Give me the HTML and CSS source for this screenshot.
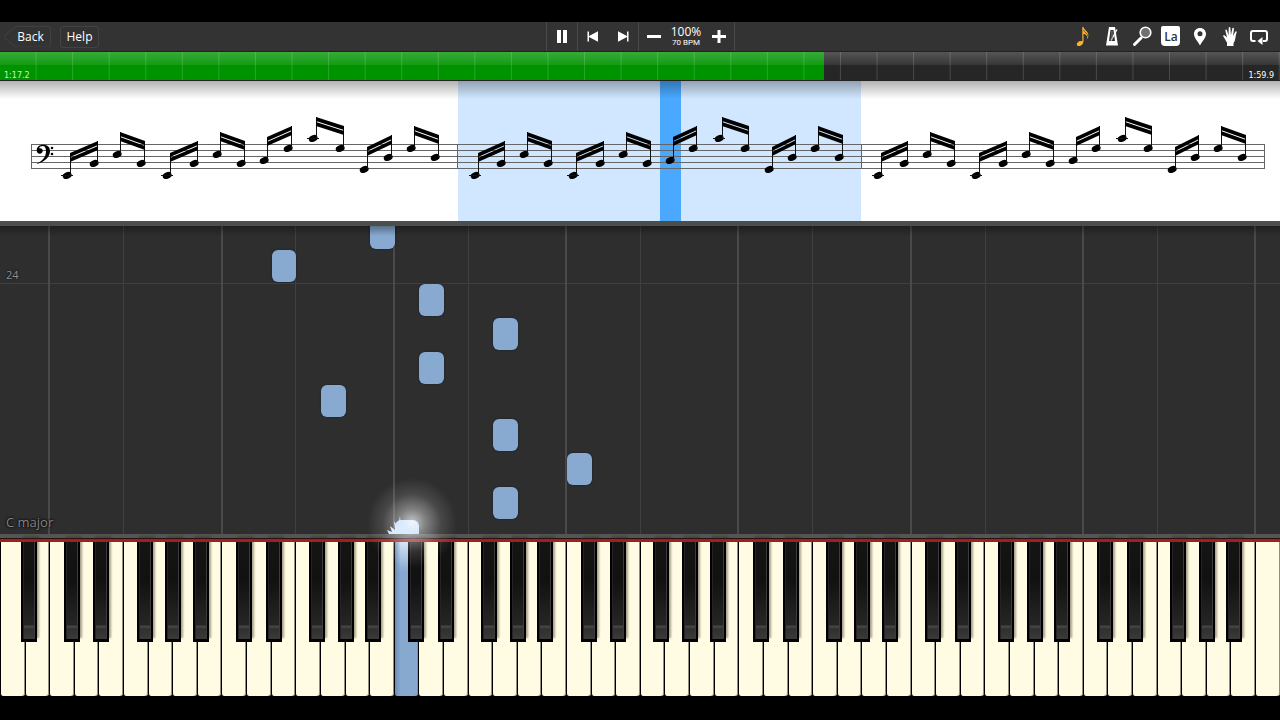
FILE: index.html
```
<!DOCTYPE html>
<html lang="en">
<head>
    <meta charset="UTF-8">
    <meta name="viewport" content="width=device-width, initial-scale=1.0">
    <title>Piano player</title>
    <link rel="stylesheet" href="styles.css">
</head>
<body>
    <header class="toolbar">
        <nav class="menu">
            <button class="menu-button back">
                <svg class="back-shape" viewBox="0 0 48 22"><path d="M13 .5H45Q47.500 .5 47.500 3V19Q47.500 21.500 45 21.500H13Q11 21.500 9 19L1 12.500Q0 11 1 9.500L9 3Q11 .5 13 .5Z"/></svg>
                Back
            </button>
            <button class="menu-button help">Help</button>
        </nav>

        <div class="transport">
            <button class="icon-button" aria-label="Pause"><svg viewBox="0 0 24 24"><path d="M7 6h4v13H7zM13 6h4v13h-4z"/></svg></button>
            <div class="skip">
                <button class="icon-button" aria-label="Previous"><svg viewBox="0 0 24 24"><path d="M6.500 7.500H8V12l9-4.700v10.400L8 13v4.500H6.500z"/></svg></button>
                <button class="icon-button" aria-label="Next"><svg viewBox="0 0 24 24"><path d="M17.500 7.500H16V12L7 7.300v10.400L16 13v4.500h1.500z"/></svg></button>
            </div>
            <div class="speed">
                <button class="icon-button" aria-label="Slower"><svg viewBox="0 0 24 24"><path d="M5 11h14v3H5z"/></svg></button>
                <div class="tempo"><span class="percent">100%</span><span class="bpm">70 BPM</span></div>
                <button class="icon-button" aria-label="Faster"><svg viewBox="0 0 24 24"><path d="M5 11h5.500V6h3v5H19v3h-5.500v5h-3v-5H5z"/></svg></button>
            </div>
        </div>

        <div class="tools">
            <button class="icon-button" aria-label="Sheet music">
                <svg class="orange" viewBox="0 0 24 24"><path d="M11.300 3h1.200c.3 3 5.700 4.500 4.800 9.500-.2 1.500-.8 2.300-1.200 2.800.8-3-.8-5-3.600-5.600V17c0 3-2.500 5-4.600 5-2.400 0-2.600-2.300-1.200-3.600 1.200-1.200 3-1.600 4.600-1z"/><path d="M12.500 6c.5 2.300 4.500 3 4.600 7" fill="none" stroke="#333" stroke-width=".7"/></svg>
            </button>
            <button class="icon-button" aria-label="Metronome">
                <svg viewBox="0 0 24 24"><path fill-rule="evenodd" d="M9 3h6l3 18.500H6zM10.500 6L9 17h6L13.500 6z"/><path d="M11 16.500L17 5.500" fill="none" stroke="#fff" stroke-width="1.300"/><path d="M12 7v9" fill="none" stroke="#777" stroke-width="1"/></svg>
            </button>
            <button class="icon-button" aria-label="Zoom">
                <svg viewBox="0 0 24 24"><path d="M11 14L4.500 20.500" fill="none" stroke="#fff" stroke-width="3" stroke-linecap="round"/><circle cx="15.500" cy="8.500" r="5.300" fill="#707070" stroke="#fff" stroke-width="1.600"/></svg>
            </button>
            <button class="icon-button" aria-label="Note labels"><span class="la">La</span></button>
            <button class="icon-button" aria-label="Bookmark">
                <svg viewBox="0 0 24 24"><path fill-rule="evenodd" d="M12 4c3.500 0 6 2.600 6 6 0 3.600-3.500 7-6 11.500C9.500 17 6 13.600 6 10c0-3.400 2.500-6 6-6zM12 7.300a2.500 2.500 0 1 0 0 5 2.500 2.500 0 1 0 0-5z"/></svg>
            </button>
            <button class="icon-button" aria-label="Hands">
                <svg viewBox="0 0 24 24"><path d="M9 22v-3.500C7.500 16.500 6.500 14 5.300 12.500c-.6-1.200.8-1.700 1.700-.8L9 13.500 7.400 6.700c-.2-1.300 1.200-1.500 1.600-.3l1.500 5L10.700 4c0-1.300 1.600-1.300 1.700 0l.5 7.200L14.300 4.600c.3-1.200 1.800-.9 1.600.3L15.100 12l2-4c.5-1.200 1.800-.6 1.500.5-1 3-1.200 6-1.800 8.200-.3 1-1 1.700-1.300 2.500V22z"/></svg>
            </button>
            <button class="icon-button" aria-label="Loop">
                <svg viewBox="0 0 24 24"><path d="M8.500 17H6q-2 0-2-2V9q0-2 2-2h12q2 0 2 2v6q0 2-2 2h-2" fill="none" stroke="#fff" stroke-width="2"/><path d="M10.500 17l5-4v8z"/></svg>
            </button>
        </div>
    </header>

    <div class="timeline">
        <input type="range" class="seek" min="0" max="119.9" step="0.1" value="77.2" aria-label="Song position">
        <span class="time elapsed">1:17.2</span>
        <span class="time total">1:59.9</span>
    </div>

    <section class="score" aria-label="Sheet music">
        <svg id="sheet" viewBox="0 0 1280 140">
            <rect class="current-bar" x="458" y="0" width="403" height="140"/>
            <rect class="cursor" x="660" y="0" width="21" height="140"/>
            <g class="staff">
                <path d="M31 63.500H1265M31 69.500H1265M31 75.500H1265M31 81.500H1265M31 87.500H1265"/>
                <path d="M31.500 63V88M457.500 63V88M861.500 63V88M1264.500 63V88"/>
            </g>
            <!-- bass clef -->
            <path d="M37 82.500c5.500-2.500 9-6.500 9-12.200 0-3.300-1-5.300-3.200-5.300-1.800 0-3.200.8-3.800 2.300 2-.6 3.700.6 3.700 2.500 0 1.700-1.200 2.900-2.900 2.900-1.900 0-3.100-1.400-3.100-3.400 0-3.400 2.700-5.500 6.500-5.500 4.300 0 6.800 2.400 6.800 6.300 0 6.300-5.500 10.700-13 13z"/>
            <circle cx="52" cy="67" r="1.300"/>
            <circle cx="52" cy="73" r="1.300"/>
        </svg>
    </section>

    <main class="roll" id="roll">
        <div class="bar-line"><span>24</span></div>
        <span class="song-key">C major</span>
    </main>

    <section class="keyboard" id="keyboard" aria-label="Keyboard"></section>

    <script src="script.js"></script>
</body>
</html>
```
FILE: styles.css
```
* {
    box-sizing: border-box;
}
body {
    margin: 0;
    padding: 22px 0 24px;
    min-height: 100vh;
    display: flex;
    flex-direction: column;
    background: #000;
    color: #fff;
    font-family: "Open Sans", "Noto Sans", sans-serif;
    font-size: 12px;
    overflow-x: hidden;
}
button {
    margin: 0;
    padding: 0;
    border: 0;
    background: none;
    color: inherit;
    font: inherit;
    cursor: pointer;
}

/* toolbar */
.toolbar {
    display: grid;
    grid-template-columns: 1fr auto 1fr;
    height: 29px;
    background: #333;
}
.menu {
    display: flex;
    align-items: center;
    gap: 9px;
    padding-left: 4px;
}
.menu-button {
    position: relative;
    height: 22px;
    font-weight: 500;
    line-height: 20px;
}
.back {
    width: 47px;
    padding-left: 6px;
}
.back-shape {
    position: absolute;
    inset: 0;
    fill: none;
    stroke: #434343;
}
.help {
    width: 39px;
    border: 1px solid #434343;
    border-radius: 3px;
}
.transport {
    display: flex;
    border-left: 1px solid #4a4a4a;
    border-right: 1px solid #4a4a4a;
}
.skip {
    display: flex;
    border-left: 1px solid #4a4a4a;
    border-right: 1px solid #4a4a4a;
}
.speed {
    display: flex;
}
.icon-button {
    display: flex;
    align-items: center;
    justify-content: center;
    width: 30px;
    height: 28px;
}
.icon-button svg {
    width: 24px;
    height: 24px;
    fill: #fff;
}
.icon-button .orange {
    fill: #f9b233;
}
.tempo {
    display: flex;
    flex-direction: column;
    align-items: center;
    width: 35px;
    padding-top: 3px;
}
.percent {
    font-size: 12px;
    line-height: 14px;
}
.bpm {
    font-family: Roboto, sans-serif;
    font-size: 8px;
    line-height: 8px;
}
.tools {
    display: flex;
    justify-content: space-between;
    justify-self: end;
    width: 204px;
    margin-right: 7px;
}
.tools .icon-button {
    width: 28px;
}
.la {
    width: 19px;
    height: 20px;
    padding-top: 2px;
    border-radius: 2px 2px 4px 4px;
    background: #fff;
    color: #333;
    font-size: 12px;
    font-weight: 600;
    line-height: 18px;
}

/* timeline */
.timeline {
    position: relative;
    height: 30px;
}
.seek {
    -webkit-appearance: none;
    appearance: none;
    display: block;
    width: 100%;
    height: 30px;
    margin: 0;
    border-top: 1px solid #222;
    border-bottom: 1px solid #222;
    background:
        linear-gradient(90deg, transparent 97%, rgba(255, 255, 255, .16) 97%) 0 0 / calc(100% / 35) 100%,
        linear-gradient(rgba(255, 255, 255, .22), rgba(255, 255, 255, .08) 45%, transparent 47%),
        linear-gradient(90deg, #009300 64.4%, #262626 64.4%);
}
.seek::-webkit-slider-thumb {
    -webkit-appearance: none;
    width: 1px;
    height: 28px;
}
.time {
    position: absolute;
    bottom: 1px;
    font-family: "DejaVu Sans", sans-serif;
    font-size: 8px;
    line-height: 9px;
    pointer-events: none;
}
.elapsed {
    left: 4px;
    color: #c4f5c4;
}
.total {
    right: 6px;
}

/* sheet music */
.score {
    position: relative;
    background: #fff;
}
.score::after {
    content: "";
    position: absolute;
    inset: 0 0 auto;
    height: 18px;
    background: linear-gradient(rgba(0, 0, 0, .3), transparent);
}
.score svg {
    display: block;
    width: 100%;
}
.current-bar {
    fill: #d1e7ff;
}
.cursor {
    fill: #4aa9ff;
}
.staff path {
    fill: none;
    stroke: #666;
}
.stem {
    stroke: #111;
}

/* falling notes */
.roll {
    position: relative;
    flex: 1;
    min-height: 200px;
    border-top: 5px solid #4c4e4c;
    background: #2e2e2e;
    overflow: hidden;
}
.roll::before {
    content: "";
    position: absolute;
    z-index: 1;
    inset: 0 0 auto;
    height: 10px;
    background: linear-gradient(rgba(0, 0, 0, .35), transparent);
}
.guide {
    position: absolute;
    top: 0;
    bottom: 0;
    width: 1px;
    background: #404040;
}
.guide.octave {
    width: 2px;
    margin-left: -1px;
    background: #4a4a4a;
}
.bar-line {
    position: absolute;
    top: 0;
    left: 0;
    right: 0;
    height: 18.700%;
    border-bottom: 1px solid #3f3f3f;
}
.bar-line span {
    position: absolute;
    left: 6px;
    bottom: 1px;
    color: #909090;
    font-size: 11px;
    line-height: 14px;
    text-shadow: 0 0 2px #000;
}
.song-key {
    position: absolute;
    z-index: 1;
    left: 6px;
    bottom: 3px;
    color: #858585;
    font-size: 13px;
    line-height: 18px;
    text-shadow: 0 0 3px #000, 0 0 2px #000;
}
.note {
    position: absolute;
    width: calc(100% / 52);
    height: 32px;
    margin-left: 1px;
    border-radius: 6px;
    background: #88aad1;
    box-shadow: 0 0 2px #101c2c;
}
.note.playing {
    background: #b8d5f5;
}

/* keyboard */
.keyboard {
    position: relative;
    display: flex;
    height: 162px;
    border-top: 4px solid #555;
    background: #000;
}
.keyboard::before {
    content: "";
    position: absolute;
    z-index: 2;
    top: 0;
    left: 0;
    right: 0;
    height: 3px;
    border-top: 1px solid #2b1212;
    background: #a02020;
}
.slot {
    position: relative;
    flex: 1;
    padding-top: 3px;
}
.white {
    display: block;
    width: 100%;
    height: 155px;
    border-left: 1px solid #000;
    border-radius: 0 0 3px 3px;
    background: #fffce3;
    box-shadow: inset -1px 0 #8f8e82;
}
.white.playing {
    background: linear-gradient(90deg, #6d8cb4, transparent 25%), linear-gradient(#c8dcf2, #87a9d0 20%);
}
.black {
    position: absolute;
    z-index: 1;
    top: 2px;
    left: 100%;
    width: 16px;
    height: 102px;
    border: 2px solid #000;
    border-top: 0;
    border-bottom-width: 3px;
    background: linear-gradient(#151515, #111 40%, #262626 86%, #4a4a4a 87%, #303030 90%, #3a3a3a);
    box-shadow: inset -1px 0 #3c3c3c, inset 1px 0 #242424, 2px -4px 2px rgba(60, 50, 30, .45);
}
.black-A { margin-left: -4px; }
.black-C { margin-left: -10px; }
.black-D { margin-left: -5px; }
.black-F { margin-left: -11px; }
.black-G { margin-left: -7px; }

/* light burst where the note meets its key */
.glow {
    position: absolute;
    z-index: 3;
    top: -60px;
    left: -27px;
    width: 90px;
    height: 90px;
    background: radial-gradient(closest-side, rgba(255, 255, 255, .75), rgba(255, 255, 255, .4) 30%, rgba(255, 255, 255, .12) 65%, transparent);
    pointer-events: none;
}
.spark {
    position: absolute;
    z-index: 4;
    top: -23px;
    left: -8px;
    width: 34px;
    height: 20px;
    fill: #dcecff;
    pointer-events: none;
}
```
FILE: script.js
```
const WHITE_KEYS = 52;
const sheet = document.getElementById('sheet');
const roll = document.getElementById('roll');
const keyboard = document.getElementById('keyboard');

// x of the note heads in the first two bars, the third repeats the second
const firstBar = [67, 94, 117, 141, 167, 194, 217, 241, 264, 288, 313, 340, 364, 388, 411, 435];
const secondBar = [475, 501, 524, 548, 573, 600, 623, 647, 670, 693, 719, 745, 769, 792, 815, 839];
const bars = [firstBar, secondBar, secondBar.map(x => x + 403)];
// head y of both notes, then the top of both stems
const pairs = [
    [94, 82, 72, 60], [73, 82, 51, 60], [94, 82, 72, 60], [73, 82, 51, 60],
    [79, 67, 56, 45], [57, 67, 36, 45], [88, 76, 66, 54], [67, 76, 45, 54]
];

function head(x, y) {
    const ledger = y === 94 || y === 57 ? `<path class="stem" d="M${x - 6} ${y + .5}h12"/>` : '';
    return `<ellipse cx="${x}" cy="${y + .5}" rx="4.600" ry="3.200" transform="rotate(-22 ${x} ${y})"/>${ledger}`;
}

let music = '';
bars.forEach(bar => pairs.forEach(([y1, y2, t1, t2], i) => {
    const x1 = bar[i * 2], x2 = bar[i * 2 + 1];
    const s1 = x1 + 3.500, s2 = x2 + 3.500;
    music += head(x1, y1) + head(x2, y2);
    music += `<path class="stem" d="M${s1} ${y1}V${t1}M${s2} ${y2}V${t2}"/>`;
    [0, 5].forEach(d => {
        music += `<path d="M${s1 - .5} ${t1 + d}L${s2 + .5} ${t2 + d}v4L${s1 - .5} ${t1 + d + 4}z"/>`;
    });
}));
sheet.insertAdjacentHTML('beforeend', music);

// octave lines at every C, weaker ones at every F
for (let i = 2; i < WHITE_KEYS; i++) {
    if (i % 7 === 2 || i % 7 === 5) {
        const line = document.createElement('div');
        line.className = i % 7 === 2 ? 'guide octave' : 'guide';
        line.style.left = `${i * 100 / WHITE_KEYS}%`;
        roll.appendChild(line);
    }
}

// white key index of each falling note, top to bottom
[15, 11, 17, 20, 17, 13, 20, 23, 20, 16].forEach((key, row) => {
    const note = document.createElement('div');
    note.className = key === 16 ? 'note playing' : 'note';
    note.style.left = `${key * 100 / WHITE_KEYS}%`;
    note.style.top = `${row * 10.950 - 3}%`;
    roll.appendChild(note);
});

for (let i = 0; i < WHITE_KEYS; i++) {
    const name = 'ABCDEFG'[i % 7];
    const slot = document.createElement('div');
    slot.className = 'slot';
    slot.innerHTML = `<button class="white${i === 16 ? ' playing' : ''}" aria-label="${name}"></button>`;
    if ('ACDFG'.includes(name) && i < WHITE_KEYS - 1) {
        slot.innerHTML += `<button class="black black-${name}" aria-label="${name} sharp"></button>`;
    }
    if (i === 16) {
        slot.innerHTML += '<div class="glow"></div>' +
            '<svg class="spark" viewBox="0 0 34 20"><path d="M3 19L1 15l5 2-2-6 5 4-1-9 4 6 2-11 1 11 3-7v8l5-6-2 8 6-5-3 7 6-3-3 5z"/></svg>';
    }
    keyboard.appendChild(slot);
}
```
